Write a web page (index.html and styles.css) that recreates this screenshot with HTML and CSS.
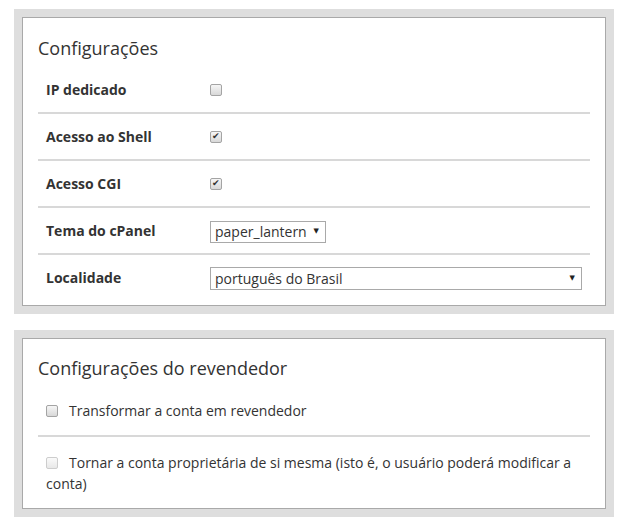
FILE: index.html
```html
<!DOCTYPE html>
<html lang="pt-BR">

<head>
    <meta charset="UTF-8">
    <meta name="viewport" content="width=device-width, initial-scale=1.0">
    <title>Configurações da conta</title>
    <link rel="stylesheet" href="styles.css">
</head>

<body>
    <div class="panel">
        <div class="panel-body">
            <h2 class="panel-title">Configurações</h2>
            <div class="setting-row">
                <label class="setting-label" for="dedicated-ip">IP dedicado</label>
                <input type="checkbox" class="check" id="dedicated-ip">
            </div>
            <div class="setting-row">
                <label class="setting-label" for="shell">Acesso ao Shell</label>
                <input type="checkbox" class="check" id="shell" checked>
            </div>
            <div class="setting-row">
                <label class="setting-label" for="cgi">Acesso CGI</label>
                <input type="checkbox" class="check" id="cgi" checked>
            </div>
            <div class="setting-row">
                <label class="setting-label" for="theme">Tema do cPanel</label>
                <div class="select-wrap select-small">
                    <select id="theme">
                        <option>paper_lantern</option>
                    </select>
                </div>
            </div>
            <div class="setting-row">
                <label class="setting-label" for="locale">Localidade</label>
                <div class="select-wrap select-wide">
                    <select id="locale">
                        <option>português do Brasil</option>
                    </select>
                </div>
            </div>
        </div>
    </div>

    <div class="panel panel-second">
        <div class="panel-body">
            <h2 class="panel-title">Configurações do revendedor</h2>
            <div class="option-row">
                <label><input type="checkbox" class="check">Transformar a conta em revendedor</label>
            </div>
            <div class="option-row">
                <label><input type="checkbox" class="check" disabled>Tornar a conta proprietária de si mesma (isto é, o usuário poderá modificar a conta)</label>
            </div>
        </div>
    </div>
</body>

</html>
```

FILE: styles.css
```css
body {
    margin: 0;
    background-color: #fff;
    font-family: "Open Sans", "DejaVu Sans", sans-serif;
    color: #333;
}

.panel {
    width: 600px;
    box-sizing: border-box;
    margin: 9px 0 0 14px;
    border: 8px solid #dedede;
}

.panel-second {
    margin-top: 16px;
}

.panel-body {
    background-color: #fff;
    border: 1px solid #a9a9a9;
    padding: 16px 15px 5px;
}

.panel-title {
    margin: 0 0 5px;
    font-size: 18px;
    line-height: 28px;
    font-weight: 400;
    color: #333;
}

.setting-row {
    display: flex;
    align-items: center;
    height: 22px;
    padding: 12px 8px 11px;
    border-bottom: 2px solid #d8d8d8;
}

.setting-row:last-child {
    border-bottom: none;
}

.setting-label {
    width: 164px;
    flex-shrink: 0;
    font-size: 14px;
    font-weight: 700;
    line-height: 20px;
}

.check {
    appearance: none;
    -webkit-appearance: none;
    width: 12px;
    height: 12px;
    margin: 0;
    border: 1px solid #a4a4a4;
    border-radius: 2px;
    background: linear-gradient(#f6f6f6, #d8d8d8);
    box-sizing: border-box;
    position: relative;
}

.check:checked::after {
    content: "✔";
    position: absolute;
    left: 1px;
    top: -3px;
    font-size: 9px;
    line-height: 14px;
    color: #333;
}

.check:disabled {
    border-color: #cdcdcd;
    background: linear-gradient(#fafafa, #e8e8e8);
}

.select-wrap {
    position: relative;
    height: 22px;
    box-sizing: border-box;
}

.select-wrap::after {
    content: "▼";
    position: absolute;
    right: 7px;
    top: 6px;
    font-size: 7px;
    line-height: 10px;
    color: #222;
    pointer-events: none;
}

.select-small {
    width: 116px;
}

.select-wide {
    width: 372px;
    height: 23px;
}

.select-wrap select {
    appearance: none;
    -webkit-appearance: none;
    width: 100%;
    height: 100%;
    margin: 0;
    padding: 0 4px;
    border: 1px solid #a9a9a9;
    border-radius: 0;
    background-color: #fff;
    font-family: "Open Sans", sans-serif;
    font-size: 14px;
    color: #333;
}

.panel-second .panel-body {
    padding-top: 15px;
    padding-bottom: 0;
}

.panel-second .panel-title {
    margin-bottom: 3px;
}

.option-row {
    padding: 15px 8px 14px;
    font-size: 14px;
    line-height: 21px;
    border-bottom: 2px solid #d8d8d8;
}

.option-row:last-child {
    border-bottom: none;
}

.option-row .check {
    vertical-align: -1px;
    margin-right: 11px;
}
```
